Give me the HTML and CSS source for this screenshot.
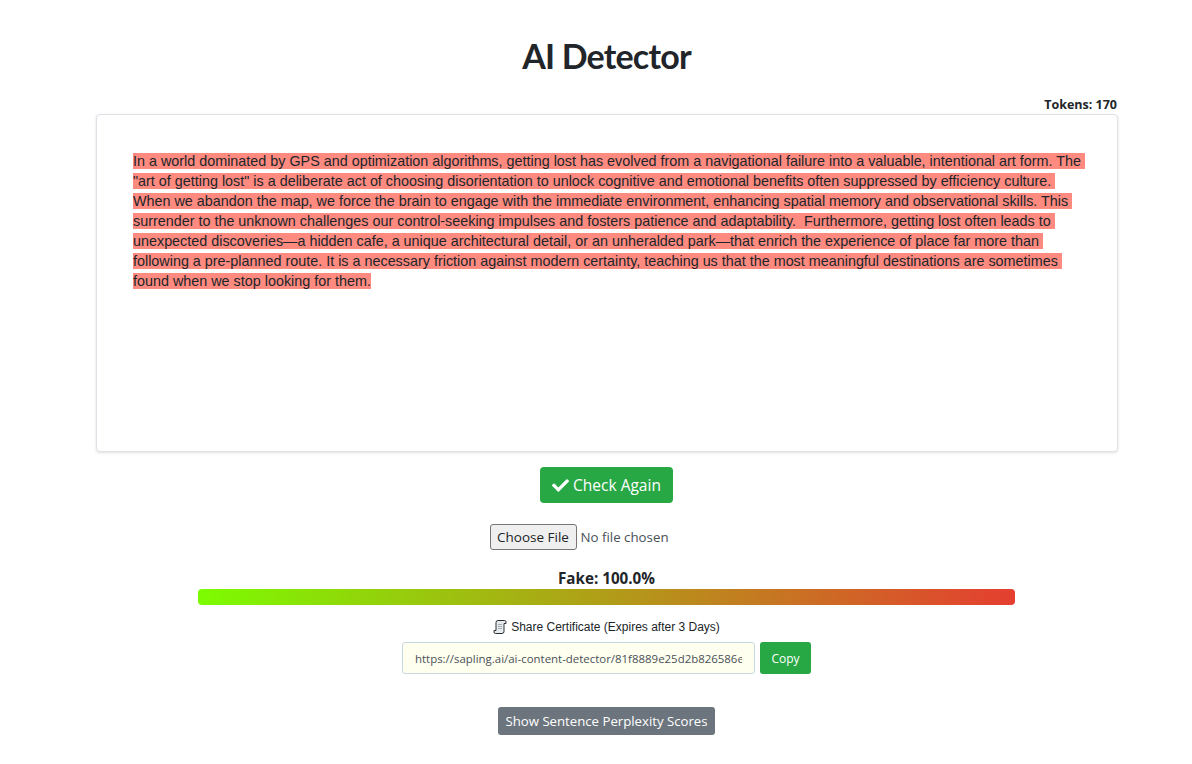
FILE: index.html
```html
<!DOCTYPE html>
<html lang="en">
<head>
  <meta charset="UTF-8" />
  <title>AI Detector</title>
  <meta name="viewport" content="width=device-width, initial-scale=1.0"/>
  <link rel="stylesheet" href="styles.css">
</head>
<body>
  <main class="page">
    <h1 class="title">AI Detector</h1>
    <div class="tokens">Tokens: 170</div>

    <div class="editor">
      <p class="editor-text"><span class="flagged">In a world dominated by GPS and optimization algorithms, getting lost has evolved from a navigational failure into a valuable, intentional art form. The "art of getting lost" is a deliberate act of choosing disorientation to unlock cognitive and emotional benefits often suppressed by efficiency culture. When we abandon the map, we force the brain to engage with the immediate environment, enhancing spatial memory and observational skills. This surrender to the unknown challenges our control-seeking impulses and fosters patience and adaptability.  Furthermore, getting lost often leads to unexpected discoveries—a hidden cafe, a unique architectural detail, or an unheralded park—that enrich the experience of place far more than following a pre-planned route. It is a necessary friction against modern certainty, teaching us that the most meaningful destinations are sometimes found when we stop looking for them.</span></p>
    </div>

    <button class="btn btn-check" type="button">
      <svg class="check-icon" viewBox="0 0 512 512" aria-hidden="true"><path fill="currentColor" d="M173.898 439.404l-166.4-166.4c-9.997-9.997-9.997-26.206 0-36.204l36.203-36.204c9.997-10 26.207-10 36.204 0L192 312.69 432.095 72.596c9.997-9.997 26.207-9.997 36.204 0l36.203 36.204c9.997 9.997 9.997 26.206 0 36.204l-294.4 294.401c-9.998 9.997-26.207 9.997-36.204-.001z"/></svg>
      Check Again
    </button>

    <input class="file-input" type="file" />

    <div class="score-label">Fake: 100.0%</div>
    <div class="score-bar"></div>

    <div class="share-label">
      <svg class="scroll-icon" viewBox="0 0 14 16" aria-hidden="true">
        <path fill="#e6eaec" stroke="#2b2f33" d="M5 1.500H11.500A1.500 1.500 0 0 1 13 3V4.500H11V12.500A2 2 0 0 1 9 14.500H2.500A1.500 1.500 0 0 1 1 13V11.500H3V3.500A2 2 0 0 1 5 1.500Z"/>
        <path fill="none" stroke="#a4adb2" d="M5 5.500H9M5 7.500H9M5 9.500H9"/>
      </svg>
      Share Certificate (Expires after 3 Days)
    </div>
    <div class="share-row">
      <input class="share-url" type="text" readonly value="https://sapling.ai/ai-content-detector/81f8889e25d2b826586e4f0c7d1a" />
      <button class="btn btn-copy" type="button">Copy</button>
    </div>

    <button class="btn btn-scores" type="button">Show Sentence Perplexity Scores</button>
  </main>
</body>
</html>
```

FILE: styles.css
```css
body {
  margin: 0;
  background: #fff;
  color: #212529;
  font-family: "Open Sans", sans-serif;
}

.page {
  display: flex;
  flex-direction: column;
  align-items: center;
  width: 1021px;
  margin-left: 96px;
  padding-top: 34px;
}

.title {
  margin: 0;
  font-family: Lato, sans-serif;
  font-size: 34px;
  line-height: 44px;
  font-weight: 700;
  letter-spacing: -0.8px;
}

.tokens {
  align-self: flex-end;
  margin-top: 17px;
  font-size: 12.5px;
  line-height: 19px;
  font-weight: 700;
}

.editor {
  box-sizing: border-box;
  align-self: flex-start;
  width: 1022px;
  height: 338px;
  padding: 36px 32px 36px 36px;
  background: #fff;
  border: 1px solid #dee2e6;
  border-radius: 4px;
  box-shadow: 0 1px 3px rgba(0, 0, 0, 0.12);
}

.editor-text {
  margin: 0;
  font-family: "Liberation Sans", Arial, sans-serif;
  font-size: 14.37px;
  line-height: 20px;
  white-space: pre-wrap;
}

.flagged {
  background: #ff8a80;
}

.btn {
  border: 0;
  color: #fff;
  font-family: "Open Sans", sans-serif;
  cursor: pointer;
}

.btn-check {
  display: flex;
  align-items: center;
  gap: 4px;
  height: 36px;
  margin-top: 15px;
  padding: 0 12px;
  background: #28a745;
  border-radius: 4px;
  font-size: 15.5px;
}

.check-icon {
  width: 17px;
  height: 17px;
}

.file-input {
  width: 234px;
  margin-top: 21px;
  font-family: "Open Sans", sans-serif;
  font-size: 13.3px;
  color: #495057;
}

.file-input::file-selector-button {
  box-sizing: border-box;
  width: 87px;
  height: 26px;
  margin-right: 4px;
  padding: 0;
  background: #efefef;
  border: 1px solid #767676;
  border-radius: 3px;
  color: #212529;
  font-family: "Open Sans", sans-serif;
  font-size: 13.5px;
}

.score-label {
  margin-top: 18px;
  margin-bottom: 1px;
  font-size: 15.2px;
  line-height: 20px;
  font-weight: 700;
}

.score-bar {
  width: 817px;
  height: 16px;
  background: linear-gradient(to right, #7cfc00, #e53e30);
  border-radius: 4px;
}

.share-label {
  display: flex;
  align-items: center;
  gap: 4px;
  margin-top: 13px;
  font-family: "Liberation Sans", Arial, sans-serif;
  font-size: 12px;
  line-height: 18px;
}

.scroll-icon {
  width: 14px;
  height: 16px;
}

.share-row {
  display: flex;
  gap: 5px;
  margin-top: 6px;
}

.share-url {
  box-sizing: border-box;
  width: 353px;
  height: 32px;
  padding: 0 12px;
  background: #fffff0;
  border: 1px solid #c5d9e0;
  border-radius: 3px;
  color: #495057;
  font-family: "Open Sans", sans-serif;
  font-size: 11.45px;
}

.btn-copy {
  width: 51px;
  height: 32px;
  background: #28a745;
  border-radius: 3px;
  font-size: 12px;
}

.btn-scores {
  width: 217px;
  height: 28px;
  margin-top: 33px;
  padding: 0;
  background: #6c757d;
  border-radius: 3px;
  font-size: 13.2px;
}
```
